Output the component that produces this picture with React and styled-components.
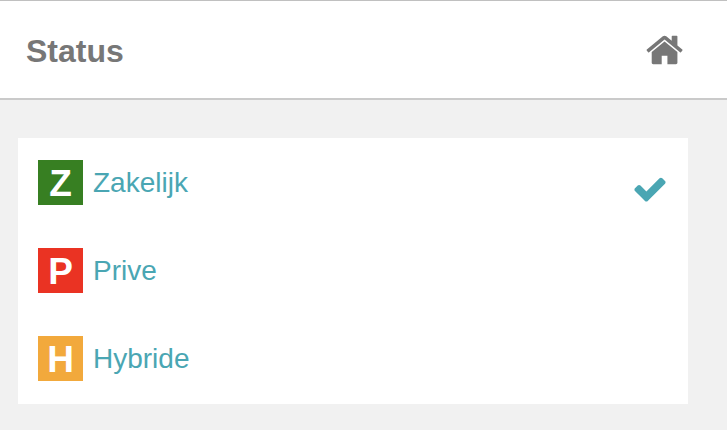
import React from 'react';
import styled, { createGlobalStyle } from 'styled-components';

const GlobalStyle = createGlobalStyle`
  body {
    margin: 0;
    background: #f1f1f1;
    font-family: "Liberation Sans", Arial, sans-serif;
  }
`;

const Header = styled.header`
  display: flex;
  justify-content: space-between;
  align-items: center;
  box-sizing: border-box;
  height: 100px;
  padding: 1px 43px 0 26px;
  background: #fff;
  border-top: 1px solid #c0c0c0;
  border-bottom: 2px solid #cacaca;
`;

const Title = styled.h1`
  margin: 0;
  padding-top: 2px;
  color: #777;
  font-size: 32px;
  line-height: 36px;
`;

const HomeIcon = styled.svg`
  display: block;
  width: 37.14px;
  height: 40px;
  margin: 0 0.4px 0.6px 0;
  fill: #777;
`;

const List = styled.ul`
  list-style: none;
  box-sizing: border-box;
  width: 670px;
  height: 266px;
  margin: 38px 0 0 18px;
  padding: 0;
  background: #fff;
`;

const Row = styled.li`
  display: flex;
  align-items: center;
  height: 88px;
  padding: 0 20px;
`;

const Badge = styled.span`
  display: flex;
  align-items: center;
  justify-content: center;
  box-sizing: border-box;
  width: 45px;
  height: 45px;
  padding-top: 2px;
  background: ${props => props.$color};
  color: #fff;
  font-size: 37px;
  font-weight: bold;
  line-height: 43px;
`;

const Label = styled.span`
  flex: 1;
  margin-left: 10px;
  color: #4aa6b3;
  font-size: 28px;
  line-height: 45px;
`;

const CheckIcon = styled.svg`
  display: block;
  width: 36px;
  height: 36px;
  margin-top: 13px;
  fill: #4aa6b3;
`;

const statuses = [
  { letter: 'Z', name: 'Zakelijk', color: '#377f22', active: true },
  { letter: 'P', name: 'Prive', color: '#ea3323' },
  { letter: 'H', name: 'Hybride', color: '#f2a93c' },
];

export default class App extends React.Component {
  render() {
    return (
      <>
        <GlobalStyle />
        <Header>
          <Title>Status</Title>
          <HomeIcon viewBox="0 0 1664 1792">
            <path d="M1408 992v480q0 26-19 45t-45 19h-384v-384h-256v384h-384q-26 0-45-19t-19-45v-480q0-1 .5-3t.5-3l575-474 575 474q1 2 1 6zm223-69l-62 74q-8 9-21 11h-3q-13 0-21-7l-692-577-692 577q-12 8-24 7-13-2-21-11l-62-74q-8-10-7-23.5t11-21.5l719-599q32-26 76-26t76 26l244 204v-195q0-14 9-23t23-9h192q14 0 23 9t9 23v408l219 182q10 8 11 21.5t-7 23.5z" />
          </HomeIcon>
        </Header>
        <List>
          {statuses.map(status => (
            <Row key={status.letter}>
              <Badge $color={status.color}>{status.letter}</Badge>
              <Label>{status.name}</Label>
              {status.active && (
                <CheckIcon viewBox="0 0 1792 1792">
                  <path d="M1671 566q0 40-28 68l-724 724-136 136q-28 28-68 28t-68-28l-136-136-362-362q-28-28-28-68t28-68l136-136q28-28 68-28t68 28l294 295 656-657q28-28 68-28t68 28l136 136q28 28 28 68z" />
                </CheckIcon>
              )}
            </Row>
          ))}
        </List>
      </>
    );
  }
}
